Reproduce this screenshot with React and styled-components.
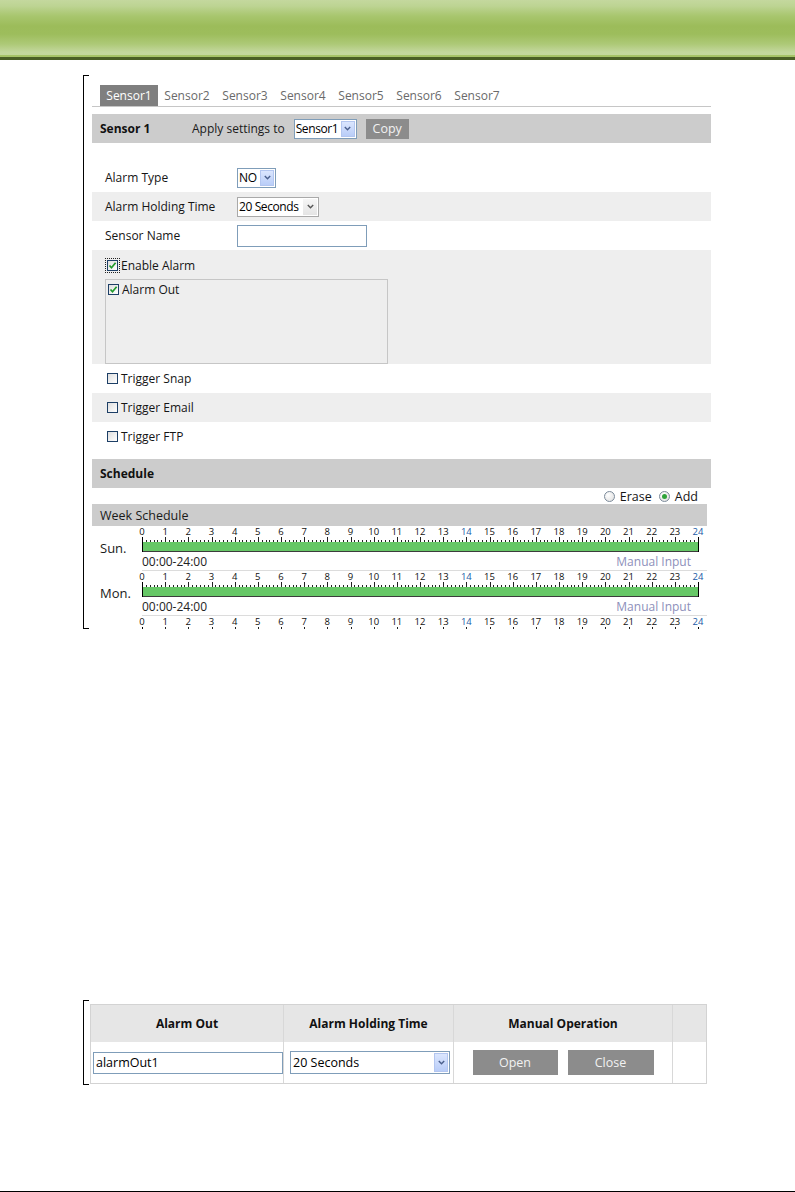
import React from "react";
import styled, { createGlobalStyle, css } from "styled-components";

const GlobalStyle = createGlobalStyle`
  html, body {
    margin: 0;
    padding: 0;
    background: #ffffff;
  }
  body {
    font-family: "Open Sans", "Noto Sans", "DejaVu Sans", sans-serif;
    font-size: 12px;
    color: #151515;
  }
`;

const TABS = ["Sensor1", "Sensor2", "Sensor3", "Sensor4", "Sensor5", "Sensor6", "Sensor7"];
const DAYS = ["Sun.", "Mon."];
const HOURS = Array.from({ length: 25 }, (_, i) => i);
const X0 = 7;
const SPAN = 556;

const Chevron = ({ color }) => (
  <svg width="7" height="5" viewBox="0 0 7 5">
    <polyline points="0.8,1 3.5,3.8 6.2,1" fill="none" stroke={color} strokeWidth="1.4" />
  </svg>
);

const Check = () => (
  <svg width="9" height="9" viewBox="0 0 9 9">
    <polyline points="1.5,4.5 3.5,6.8 7.6,1.8" fill="none" stroke="#1f9a2a" strokeWidth="1.7" />
  </svg>
);

const Checkbox = ({ checked, focus }) => (
  <Box $focus={focus}>{checked && <Check />}</Box>
);

const Select = ({ value, width, height = 20, tone = "blue", roomy }) => (
  <SelectBox $w={width} $h={height} $tone={tone}>
    <SelectValue $h={height} $roomy={roomy}>{value}</SelectValue>
    <SelectButton $tone={tone}>
      <Chevron color={tone === "blue" ? "#4a5f8c" : "#555"} />
    </SelectButton>
  </SelectBox>
);

const Ruler = () => {
  const ticks = Array.from({ length: 24 * 6 + 1 }, (_, i) => i);
  return (
    <svg width="572" height="26">
      {HOURS.map((h) => (
        <text
          key={h}
          x={X0 + (h * SPAN) / 24}
          y="9"
          textAnchor="middle"
          fontSize="9.5"
          fontFamily="Open Sans, sans-serif"
          fill={h === 14 || h === 24 ? "#1b5aa6" : "#111"}
        >
          {h}
        </text>
      ))}
      <rect x={X0} y="16" width={SPAN} height="10" fill="#66c766" />
      <rect x={X0} y="25" width={SPAN} height="1" fill="#3c3c3c" />
      {ticks.map((i) => {
        const x = Math.round(X0 + (i * SPAN) / 144) + 0.5;
        const major = i % 6 === 0;
        return (
          <line key={i} x1={x} x2={x} y1={major ? 11 : 14} y2="16" stroke="#222" strokeWidth="1" />
        );
      })}
      <line x1={X0 + 0.5} x2={X0 + 0.5} y1="11" y2="26" stroke="#000" />
      <line x1={X0 + SPAN + 0.5} x2={X0 + SPAN + 0.5} y1="11" y2="26" stroke="#000" />
    </svg>
  );
};

export default function App() {
  return (
    <Page>
      <GlobalStyle />
      <Banner />

      <Bracket $top={15} $h={554} $pad="10px 0 0 8px">
        <TabBar>
          {TABS.map((t, i) => (
            <Tab key={t} $active={i === 0}>
              {t}
            </Tab>
          ))}
        </TabBar>

        <TitleBar $mt={7}>
          <BarTitle>Sensor 1</BarTitle>
          <span>Apply settings to</span>
          <Spacer $w={9} />
          <Select value="Sensor1" width={63} />
          <Spacer $w={9} />
          <GreyButton $w={43} $h={20}>Copy</GreyButton>
        </TitleBar>

        <Form>
          <FieldRow>
            <FieldLabel>Alarm Type</FieldLabel>
            <Select value="NO" width={39} />
          </FieldRow>
          <FieldRow $shade>
            <FieldLabel>Alarm Holding Time</FieldLabel>
            <Select value="20 Seconds" width={82} tone="grey" />
          </FieldRow>
          <FieldRow>
            <FieldLabel>Sensor Name</FieldLabel>
            <TextInput $w={130} $h={22} defaultValue="" />
          </FieldRow>

          <AlarmBlock>
            <CheckLine>
              <Checkbox checked focus />
              <CheckText>Enable Alarm</CheckText>
            </CheckLine>
            <OutputBox>
              <CheckLine $h={12}>
                <Checkbox checked />
                <CheckText>Alarm Out</CheckText>
              </CheckLine>
            </OutputBox>
          </AlarmBlock>

          <CheckRow>
            <Checkbox />
            <CheckText>Trigger Snap</CheckText>
          </CheckRow>
          <CheckRow $shade>
            <Checkbox />
            <CheckText>Trigger Email</CheckText>
          </CheckRow>
          <CheckRow>
            <Checkbox />
            <CheckText>Trigger FTP</CheckText>
          </CheckRow>
        </Form>

        <TitleBar $mt={8}>
          <BarTitle>Schedule</BarTitle>
        </TitleBar>

        <ModeRow>
          <Radio />
          <ModeText>Erase</ModeText>
          <Radio $on />
          <ModeText $last>Add</ModeText>
        </ModeRow>

        <TitleBar $w={615} $h={22} $fs={12.5}>
          Week Schedule
        </TitleBar>

        {DAYS.map((d) => (
          <DayBlock key={d}>
            <DayName>{d}</DayName>
            <Ruler />
            <TimeLine>
              <span>00:00-24:00</span>
              <ManualLink>Manual Input</ManualLink>
            </TimeLine>
            <Rule />
          </DayBlock>
        ))}
        <DayBlock $partial>
          <DayName />
          <Ruler />
        </DayBlock>
      </Bracket>

      <Bracket $top={371} $h={85} $pad="4px 0 0 6px">
        <Table>
          <HeadCell>Alarm Out</HeadCell>
          <HeadCell>Alarm Holding Time</HeadCell>
          <HeadCell>Manual Operation</HeadCell>
          <HeadCell $last />
          <BodyCell $pl={2}>
            <TextInput $w={190} $h={22} defaultValue="alarmOut1" />
          </BodyCell>
          <BodyCell $pl={6}>
            <Select value="20 Seconds" width={160} height={23} roomy />
          </BodyCell>
          <BodyCell $center>
            <GreyButton $w={85} $h={25}>Open</GreyButton>
            <GreyButton $w={86} $h={25}>Close</GreyButton>
          </BodyCell>
          <BodyCell $last />
        </Table>
      </Bracket>

      <FootLine />
    </Page>
  );
}

const Page = styled.div`
  width: 795px;
  height: 1192px;
  display: flex;
  flex-direction: column;
  overflow: hidden;
`;

const Banner = styled.header`
  flex: none;
  height: 60px;
  background: linear-gradient(
    to bottom,
    #c4d89e 0px,
    #bdd493 6px,
    #a8c66e 16px,
    #9cbc5a 26px,
    #9dbd5c 34px,
    #adc977 44px,
    #c3d79d 52px,
    #c4d89e 55px,
    #a6c368 55px,
    #a6c368 57px,
    #4b5f26 57px,
    #4b5f26 60px
  );
`;

const Bracket = styled.section`
  position: relative;
  flex: none;
  box-sizing: border-box;
  margin: ${(p) => p.$top}px 0 0 83px;
  height: ${(p) => p.$h}px;
  padding: ${(p) => p.$pad};
  border-left: 1px solid #000;
  overflow: hidden;

  &::before,
  &::after {
    content: "";
    position: absolute;
    left: 0;
    width: 5px;
    height: 1px;
    background: #000;
  }
  &::before {
    top: 0;
  }
  &::after {
    bottom: 0;
  }
`;

const TabBar = styled.div`
  display: flex;
  width: 619px;
  box-sizing: border-box;
  padding-left: 8px;
  border-bottom: 1px solid #c6c6c6;
`;

const Tab = styled.div`
  width: 58px;
  height: 21px;
  line-height: 21px;
  text-align: center;
  color: ${(p) => (p.$active ? "#ffffff" : "#6a6a6a")};
  background: ${(p) => (p.$active ? "#7f7f7f" : "transparent")};
`;

const TitleBar = styled.div`
  display: flex;
  align-items: center;
  box-sizing: border-box;
  width: ${(p) => p.$w || 619}px;
  height: ${(p) => p.$h || 29}px;
  margin-top: ${(p) => p.$mt || 0}px;
  padding-left: 8px;
  background: #cccccc;
  font-size: ${(p) => p.$fs || 12}px;
  color: #1a1a1a;
`;

const BarTitle = styled.b`
  width: 92px;
  font-weight: 700;
  color: #111;
`;

const Spacer = styled.span`
  width: ${(p) => p.$w}px;
  flex: none;
`;

const GreyButton = styled.div`
  display: flex;
  align-items: center;
  justify-content: center;
  width: ${(p) => p.$w}px;
  height: ${(p) => p.$h}px;
  background: #8c8c8c;
  color: #f2f2f2;
  font-size: 12.5px;
`;

const SelectBox = styled.div`
  display: flex;
  box-sizing: border-box;
  width: ${(p) => p.$w}px;
  height: ${(p) => p.$h}px;
  border: 1px solid ${(p) => (p.$tone === "grey" ? "#a9a9a9" : "#7f9db9")};
  background: #ffffff;
`;

const SelectValue = styled.span`
  flex: 1;
  padding-left: ${(p) => (p.$roomy ? 2 : 1)}px;
  line-height: ${(p) => p.$h - 2}px;
  white-space: nowrap;
  color: #000;
  font-size: ${(p) => (p.$roomy ? 12.5 : 12)}px;
  letter-spacing: ${(p) => (p.$roomy ? 0 : -0.4)}px;
`;

const SelectButton = styled.span`
  flex: none;
  display: flex;
  align-items: center;
  justify-content: center;
  box-sizing: border-box;
  width: 14px;
  margin: 1px;
  ${(p) =>
    p.$tone === "grey"
      ? css`
          background: linear-gradient(#f6f6f6, #e4e4e4);
        `
      : css`
          background: linear-gradient(#dbe6fe, #b9cdf8);
          border: 1px solid #b3c6f0;
        `}
`;

const TextInput = styled.input`
  box-sizing: border-box;
  width: ${(p) => p.$w}px;
  height: ${(p) => p.$h}px;
  margin: 0;
  padding: 0 2px;
  border: 1px solid #7f9db9;
  font: inherit;
  font-size: 12.5px;
  color: #000;
  outline: none;
`;

const Form = styled.div`
  width: 619px;
  margin-top: 20px;
`;

const FieldRow = styled.div`
  display: flex;
  align-items: center;
  height: 29px;
  padding-left: 13px;
  background: ${(p) => (p.$shade ? "#eeeeee" : "transparent")};
`;

const FieldLabel = styled.span`
  width: 132px;
  flex: none;
`;

const CheckRow = styled.div`
  display: flex;
  align-items: center;
  height: 29px;
  padding-left: 15px;
  background: ${(p) => (p.$shade ? "#eeeeee" : "transparent")};
`;

const Box = styled.span`
  flex: none;
  display: inline-flex;
  align-items: center;
  justify-content: center;
  box-sizing: border-box;
  width: 11px;
  height: 11px;
  border: 1px solid #1d3f66;
  background: linear-gradient(135deg, #dedede, #ffffff);
  ${(p) =>
    p.$focus &&
    css`
      outline: 1px dotted #222;
      outline-offset: 1px;
    `}
`;

const CheckText = styled.span`
  margin-left: 3px;
  font-size: 12px;
`;

const AlarmBlock = styled.div`
  box-sizing: border-box;
  height: 114px;
  padding: 7px 0 0 15px;
  background: #eeeeee;
`;

const CheckLine = styled.div`
  display: flex;
  align-items: center;
  height: ${(p) => p.$h || 16}px;
`;

const OutputBox = styled.div`
  box-sizing: border-box;
  width: 283px;
  height: 85px;
  margin: 6px 0 0 -2px;
  padding: 3px 0 0 2px;
  border: 1px solid #c6c6c6;
`;

const ModeRow = styled.div`
  display: flex;
  align-items: center;
  justify-content: flex-end;
  box-sizing: border-box;
  width: 619px;
  height: 16px;
  padding-right: 13px;
`;

const Radio = styled.span`
  flex: none;
  display: flex;
  align-items: center;
  justify-content: center;
  box-sizing: border-box;
  width: 11px;
  height: 11px;
  border-radius: 50%;
  border: 1px solid #7b8a9a;
  background: radial-gradient(circle at 35% 35%, #ffffff, #dcdcdc);

  &::after {
    content: "";
    display: ${(p) => (p.$on ? "block" : "none")};
    width: 5px;
    height: 5px;
    border-radius: 50%;
    background: #2fa33a;
  }
`;

const ModeText = styled.span`
  margin: 0 ${(p) => (p.$last ? 0 : 7)}px 0 5px;
  font-size: 12.5px;
`;

const DayBlock = styled.div`
  display: grid;
  grid-template-columns: 35px 572px;
  grid-template-rows: ${(p) => (p.$partial ? "26px" : "26px 18px 1px")};
  padding-left: 8px;
`;

const DayName = styled.div`
  grid-row: 1 / span 2;
  padding-top: 14px;
  font-size: 13px;
  line-height: 16px;
  color: #1a1a1a;
`;

const TimeLine = styled.div`
  grid-column: 2;
  display: flex;
  justify-content: space-between;
  align-items: center;
  padding: 0 16px 0 7px;
  font-size: 12px;
  color: #222;
`;

const ManualLink = styled.span`
  color: #8d8fba;
  font-size: 12px;
`;

const Rule = styled.div`
  grid-column: 2;
  margin-left: 7px;
  background: #dcdcdc;
`;

const Table = styled.div`
  display: grid;
  grid-template-columns: 193px 170px 219px 33px;
  border: 1px solid #d3d3d3;
  width: 615px;
`;

const cellBase = css`
  display: flex;
  align-items: center;
  box-sizing: border-box;
  border-right: ${(p) => (p.$last ? "none" : "1px solid #d8d8d8")};
`;

const HeadCell = styled.div`
  ${cellBase}
  justify-content: center;
  height: 37px;
  background: #e6e6e6;
  font-weight: 700;
  color: #111;
`;

const BodyCell = styled.div`
  ${cellBase}
  height: 41px;
  padding-left: ${(p) => p.$pl || 0}px;
  justify-content: ${(p) => (p.$center ? "center" : "flex-start")};
  gap: 10px;
  background: #ffffff;
`;

const FootLine = styled.div`
  flex: none;
  margin-top: auto;
  height: 1px;
  background: #000;
`;
